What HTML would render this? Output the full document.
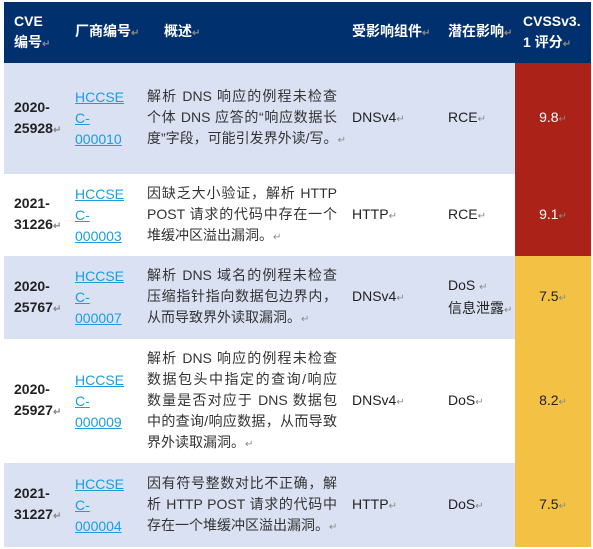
<!DOCTYPE html>
<html><head><meta charset="utf-8"><style>
*{margin:0;padding:0;box-sizing:border-box}
body{width:593px;height:549px;background:#fff;font-family:"Liberation Sans","Noto Sans CJK SC",sans-serif;font-size:14px;color:#222;overflow:hidden}
table{position:absolute;left:4px;top:2px;border-collapse:collapse;table-layout:fixed;width:587px}
td,th{vertical-align:middle;padding:0 0 0 7px;line-height:21px;text-align:left}
th{background:#00306e;color:#fff;font-weight:bold;font-size:14px;height:61px;white-space:nowrap}
tr.b td{background:#d9e1f2}
td.c1{font-weight:bold;padding-left:10px}
a{color:#1a9ee0;text-decoration:underline}
td.s{text-align:center;padding:0}
.r{background:#ab2218 !important;color:#fff}
.y{background:#f3c144 !important;color:#222}
.m{color:#888;font-size:10px}
.d div{width:190px;white-space:nowrap}
.d div.j{text-align:justify;text-align-last:justify}
.d{color:#333}
</style></head><body>
<table>
<colgroup><col style="width:64px"><col style="width:72px"><col style="width:205px"><col style="width:96px"><col style="width:74px"><col style="width:76px"></colgroup>
<tr><th style="padding-left:10px">CVE<br>编号<span class="m">↵</span></th><th>厂商编号<span class="m">↵</span></th><th style="padding-left:24px">概述<span class="m">↵</span></th><th>受影响组件<span class="m">↵</span></th><th>潜在影响<span class="m">↵</span></th><th style="padding-left:8px">CVSSv3.<br>1 评分<span class="m">↵</span></th></tr>
<tr class="b" style="height:111px"><td class="c1">2020-<br>25928<span class="m">↵</span></td><td><a>HCCSE<br>C-<br>000010</a></td><td class="d"><div class="j">解析 DNS 响应的例程未检查</div><div class="j">个体 DNS 应答的“响应数据长</div><div>度”字段，可能引发界外读/写。<span class="m">↵</span></div></td><td>DNSv4<span class="m">↵</span></td><td>RCE<span class="m">↵</span></td><td class="s r">9.8<span class="m">↵</span></td></tr>
<tr style="height:82px"><td class="c1">2021-<br>31226<span class="m">↵</span></td><td><a>HCCSE<br>C-<br>000003</a></td><td class="d"><div class="j">因缺乏大小验证，解析 HTTP</div><div class="j">POST 请求的代码中存在一个</div><div>堆缓冲区溢出漏洞。<span class="m">↵</span></div></td><td>HTTP<span class="m">↵</span></td><td>RCE<span class="m">↵</span></td><td class="s r">9.1<span class="m">↵</span></td></tr>
<tr class="b" style="height:83px"><td class="c1">2020-<br>25767<span class="m">↵</span></td><td><a>HCCSE<br>C-<br>000007</a></td><td class="d"><div class="j">解析 DNS 域名的例程未检查</div><div class="j">压缩指针指向数据包边界内，</div><div>从而导致界外读取漏洞。<span class="m">↵</span></div></td><td>DNSv4<span class="m">↵</span></td><td>DoS <span class="m">↵</span><br>信息泄露<span class="m">↵</span></td><td class="s y">7.5<span class="m">↵</span></td></tr>
<tr style="height:124px"><td class="c1">2020-<br>25927<span class="m">↵</span></td><td><a>HCCSE<br>C-<br>000009</a></td><td class="d"><div class="j">解析 DNS 响应的例程未检查</div><div class="j">数据包头中指定的查询/响应</div><div class="j">数量是否对应于 DNS 数据包</div><div class="j">中的查询/响应数据，从而导致</div><div>界外读取漏洞。<span class="m">↵</span></div></td><td>DNSv4<span class="m">↵</span></td><td>DoS<span class="m">↵</span></td><td class="s y">8.2<span class="m">↵</span></td></tr>
<tr class="b" style="height:84px"><td class="c1">2021-<br>31227<span class="m">↵</span></td><td><a>HCCSE<br>C-<br>000004</a></td><td class="d"><div class="j">因有符号整数对比不正确，解</div><div class="j">析 HTTP POST 请求的代码中</div><div>存在一个堆缓冲区溢出漏洞。<span class="m">↵</span></div></td><td>HTTP<span class="m">↵</span></td><td>DoS<span class="m">↵</span></td><td class="s y">7.5<span class="m">↵</span></td></tr>
</table>
</body></html>
